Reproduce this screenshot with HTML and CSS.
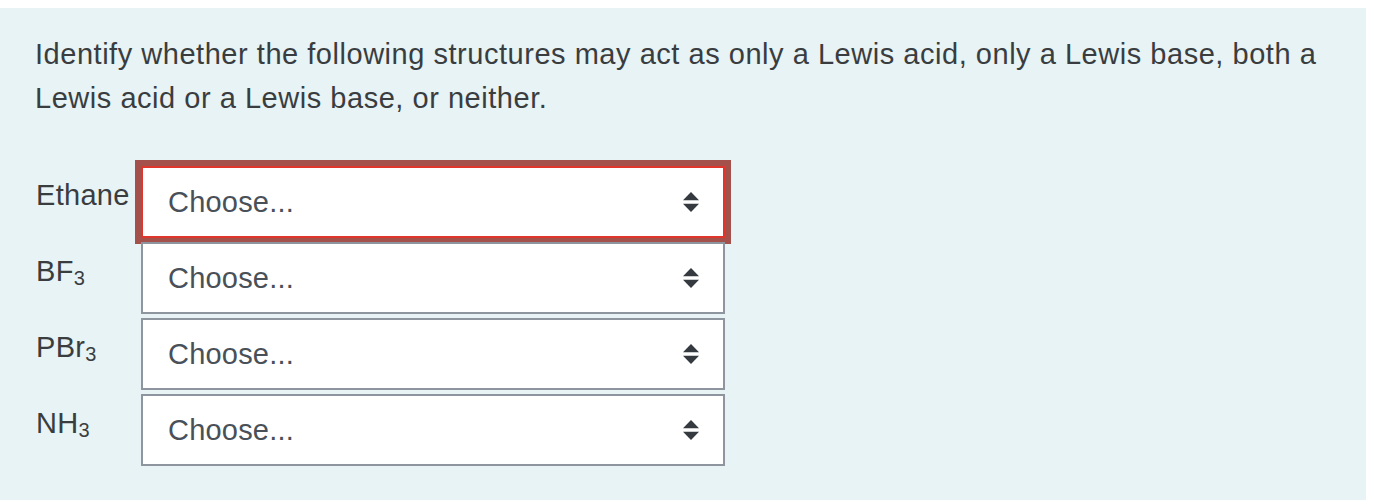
FILE: index.html
```html
<!DOCTYPE html>
<html>
<head>
<meta charset="utf-8">
<link rel="stylesheet" href="styles.css">
</head>
<body>
<div class="panel">
  <p class="prompt">Identify whether the following structures may act as only a Lewis acid, only a Lewis base, both a Lewis acid or a Lewis base, or neither.</p>
  <div class="rows">
    <div class="row">
      <label class="lbl">Ethane</label>
      <div class="select focused"><span class="val">Choose...</span><svg class="arrows" width="16" height="20" viewBox="0 0 16 20"><polygon points="0,8.3 8,0 16,8.3"/><polygon points="0,11.7 16,11.7 8,20"/></svg></div>
    </div>
    <div class="row">
      <label class="lbl">BF<sub>3</sub></label>
      <div class="select"><span class="val">Choose...</span><svg class="arrows" width="16" height="20" viewBox="0 0 16 20"><polygon points="0,8.3 8,0 16,8.3"/><polygon points="0,11.7 16,11.7 8,20"/></svg></div>
    </div>
    <div class="row">
      <label class="lbl">PBr<sub>3</sub></label>
      <div class="select"><span class="val">Choose...</span><svg class="arrows" width="16" height="20" viewBox="0 0 16 20"><polygon points="0,8.3 8,0 16,8.3"/><polygon points="0,11.7 16,11.7 8,20"/></svg></div>
    </div>
    <div class="row">
      <label class="lbl">NH<sub>3</sub></label>
      <div class="select"><span class="val">Choose...</span><svg class="arrows" width="16" height="20" viewBox="0 0 16 20"><polygon points="0,8.3 8,0 16,8.3"/><polygon points="0,11.7 16,11.7 8,20"/></svg></div>
    </div>
  </div>
</div>
</body>
</html>
```

FILE: styles.css
```css
html, body {
  margin: 0;
  padding: 0;
  background: #ffffff;
}
body {
  padding-top: 8px;
  font-family: "Liberation Sans", Arial, sans-serif;
  color: #3a3d40;
}
.panel {
  width: 1366px;
  box-sizing: border-box;
  background: #e7f3f5;
  padding: 24px 35px 40px 35px;
}
.prompt {
  margin: 0;
  font-size: 29px;
  line-height: 44px;
  letter-spacing: 0.53px;
  width: 1300px;
}
.rows {
  margin-top: 46px;
  display: flex;
  flex-direction: column;
  gap: 4px;
}
.row {
  display: flex;
  align-items: flex-start;
}
.lbl {
  width: 106px;
  flex: none;
  font-size: 29px;
  line-height: 44px;
  letter-spacing: 0.3px;
  padding-top: 7px;
  padding-left: 1px;
  box-sizing: border-box;
}
.lbl sub {
  font-size: 20px;
  line-height: 0;
  vertical-align: -4px;
}
.select {
  width: 584px;
  height: 72px;
  box-sizing: border-box;
  border: 2px solid #8f959e;
  background: #ffffff;
  display: flex;
  align-items: center;
  justify-content: space-between;
  padding: 0 24px 0 25px;
}
.select.focused {
  border-color: #e0352b;
  box-shadow: 0 0 0 6px #a5514b;
}
.val {
  font-size: 29px;
  line-height: 44px;
  letter-spacing: 0.2px;
  color: #495057;
}
.arrows {
  fill: #343a40;
  display: block;
}
```
